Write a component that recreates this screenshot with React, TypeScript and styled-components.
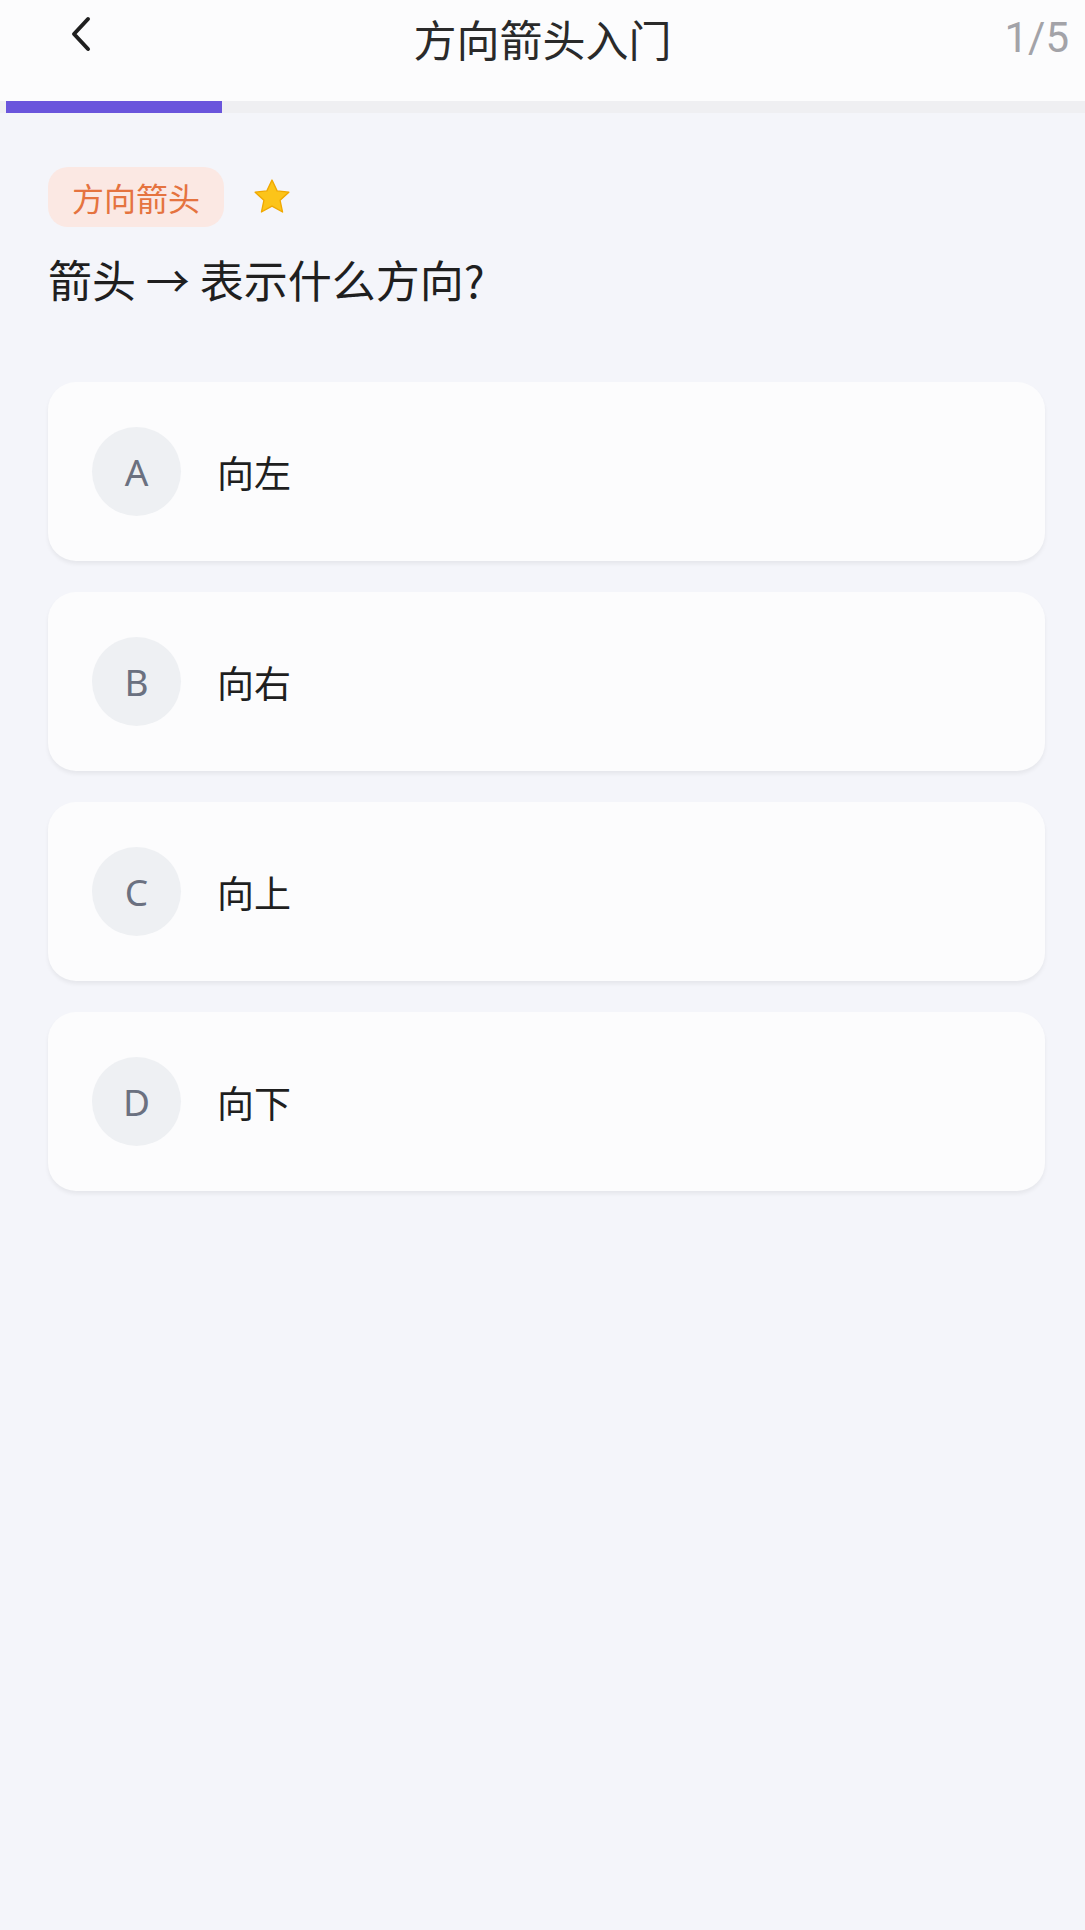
import React from "react";
import styled, { createGlobalStyle } from "styled-components";

const GlobalStyle = createGlobalStyle`
  html, body {
    margin: 0;
    padding: 0;
    background: #f4f5fa;
    font-family: "Noto Sans", "Noto Sans CJK SC", sans-serif;
  }
  * { box-sizing: border-box; }
`;

const Page = styled.div`
  width: 1085px;
  min-height: 1930px;
  background: #f4f5fa;
`;

const Header = styled.header`
  height: 101px;
  background: #fcfcfd;
  display: grid;
  grid-template-columns: 150px 1fr 150px;
  align-items: center;
  padding-bottom: 26px;
`;

const BackButton = styled.button`
  border: none;
  background: none;
  padding: 0 0 8px 68px;
  display: flex;
  align-items: center;
  cursor: pointer;
  color: #222;
`;

const Title = styled.h1`
  margin: 0;
  text-align: center;
  font-size: 43px;
  font-weight: 400;
  color: #2a2a2a;
  font-family: "Noto Sans CJK SC", sans-serif;
`;

const Counter = styled.span`
  text-align: right;
  padding-right: 16px;
  font-size: 42px;
  color: #a3a3a8;
  font-family: Roboto, sans-serif;
`;

const Track = styled.div`
  height: 12px;
  background: #efeff2;
  padding-left: 6px;
`;

const Fill = styled.div`
  height: 100%;
  background: #6a55dc;
`;

const Body = styled.main`
  padding: 54px 40px 0 48px;
`;

const TagRow = styled.div`
  display: flex;
  align-items: center;
  gap: 28px;
`;

const Tag = styled.span`
  display: inline-flex;
  align-items: center;
  height: 60px;
  padding: 0 24px;
  border-radius: 20px;
  background: #fbe8e3;
  color: #e5733f;
  font-size: 32px;
  font-family: "Noto Sans CJK SC", sans-serif;
`;

const Question = styled.h2`
  margin: 22px 0 73px;
  font-size: 44px;
  font-weight: 400;
  color: #1f1f1f;
  font-family: "Noto Sans CJK SC", sans-serif;
  line-height: 60px;
`;

const Options = styled.div`
  display: flex;
  flex-direction: column;
  gap: 31px;
`;

const OptionCard = styled.button`
  height: 179px;
  width: 997px;
  border: none;
  border-radius: 28px;
  background: #fcfcfd;
  box-shadow: 0 3px 4px rgba(0, 0, 0, 0.06);
  display: flex;
  align-items: center;
  gap: 36px;
  padding: 0 0 0 44px;
  cursor: pointer;
  text-align: left;
`;

const Letter = styled.span`
  width: 89px;
  height: 89px;
  border-radius: 50%;
  background: #eef0f3;
  color: #6b7180;
  font-size: 37px;
  font-family: "Noto Sans", sans-serif;
  display: flex;
  align-items: center;
  justify-content: center;
`;

const OptionText = styled.span`
  font-size: 37px;
  color: #1f1f1f;
  font-family: "Noto Sans CJK SC", sans-serif;
`;

const Star = () => (
  <svg width="40" height="38" viewBox="0 0 24 23">
    <path
      d="M12 1.2l3.1 6.6 7.1.8-5.3 4.9 1.5 7.1L12 17l-6.4 3.6 1.5-7.1L1.8 8.6l7.1-.8z"
      fill="#fcc419"
      stroke="#f0a800"
      strokeWidth="0.8"
      strokeLinejoin="round"
    />
  </svg>
);

const options = [
  { key: "A", text: "向左" },
  { key: "B", text: "向右" },
  { key: "C", text: "向上" },
  { key: "D", text: "向下" },
];

const App: React.FC = () => {
  return (
    <Page>
      <GlobalStyle />
      <Header>
        <BackButton aria-label="返回">
          <svg width="26" height="36" viewBox="0 0 26 36">
            <polyline
              points="20,3 6,18 20,33"
              fill="none"
              stroke="#1f1f1f"
              strokeWidth="4"
              strokeLinecap="round"
              strokeLinejoin="round"
            />
          </svg>
        </BackButton>
        <Title>方向箭头入门</Title>
        <Counter>1/5</Counter>
      </Header>
      <Track>
        <Fill style={{ width: `${(1 / 5) * 100}%` }} />
      </Track>
      <Body>
        <TagRow>
          <Tag>方向箭头</Tag>
          <Star />
        </TagRow>
        <Question>箭头 → 表示什么方向?</Question>
        <Options>
          {options.map((o) => (
            <OptionCard key={o.key}>
              <Letter>{o.key}</Letter>
              <OptionText>{o.text}</OptionText>
            </OptionCard>
          ))}
        </Options>
      </Body>
    </Page>
  );
};

export default App;
